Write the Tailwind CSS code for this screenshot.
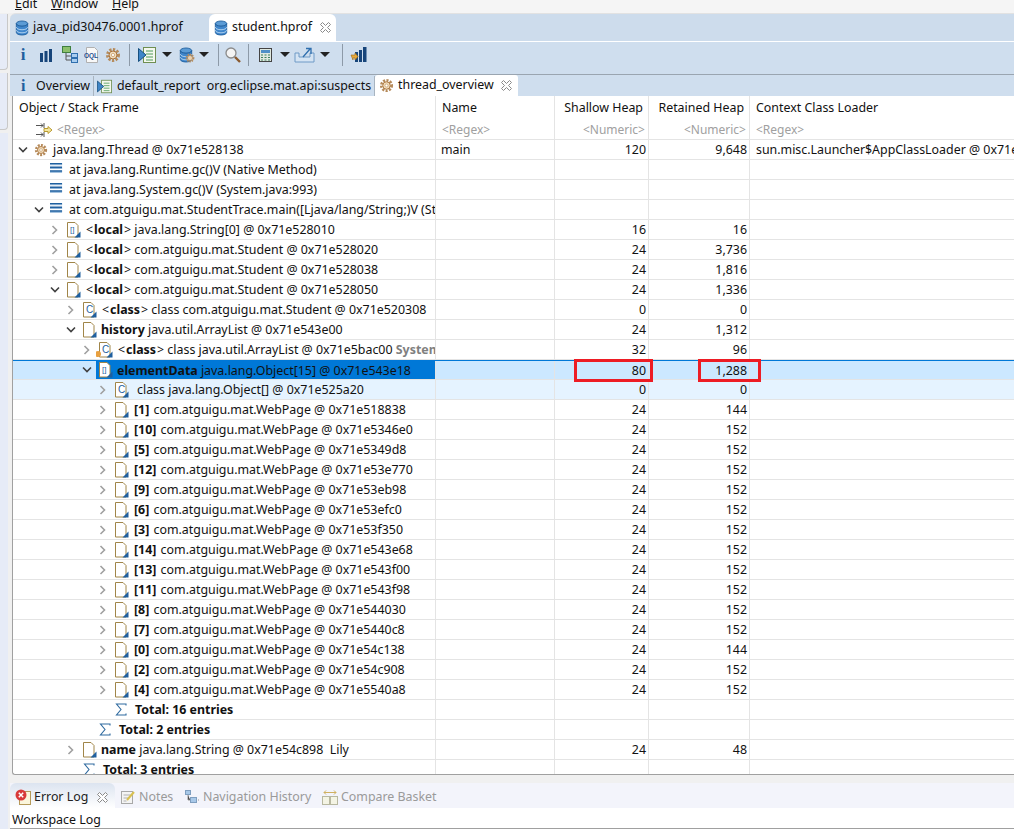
<!DOCTYPE html>
<html lang="en">
<head>
  <meta charset="UTF-8" />
  <title>student.hprof - Memory Analyzer</title>
  <script src="https://cdn.jsdelivr.net/npm/@tailwindcss/browser@4"></script>
</head>
<body class="bg-[#f0f0f0] font-['Noto_Sans',sans-serif] text-[12.4px] text-[#111]">
  <svg class="hidden">
    <symbol id="db" viewBox="0 0 16 18">
      <ellipse cx="8" cy="4" rx="6.500" ry="3" fill="#5b9bd5" stroke="#1f5f9e"/>
      <path d="M1.500 4v10c0 1.700 3 3 6.500 3s6.500-1.300 6.500-3V4c0 1.700-3 3-6.500 3s-6.500-1.300-6.500-3z" fill="#3f86cc" stroke="#1f5f9e"/>
      <path d="M1.500 8c0 1.700 3 3 6.500 3s6.500-1.300 6.500-3M1.500 11.500c0 1.700 3 3 6.500 3s6.500-1.300 6.500-3" fill="none" stroke="#bcd9f2"/>
    </symbol>
    <symbol id="gear" viewBox="0 0 16 16">
      <circle cx="8" cy="8" r="5.500" fill="none" stroke="#b58a5a" stroke-width="3" stroke-dasharray="2.200 1.400"/>
      <circle cx="8" cy="8" r="4" fill="#f1dcbc" stroke="#a9733c"/>
      <circle cx="8" cy="8" r="1.600" fill="#fff" stroke="#c9a06c" stroke-width=".8"/>
    </symbol>
    <symbol id="report" viewBox="0 0 18 18">
      <rect x="5.500" y="1.500" width="12" height="15" fill="#f4f8ee" stroke="#6f8f52"/>
      <path d="M8 5h7M8 8h7M8 11h7M8 14h7" stroke="#4f9a5a"/>
      <path d="M.5 2.500 8 9l-7.500 6.500z" fill="#3f86c8" stroke="#17507f"/>
    </symbol>
    <symbol id="frame" viewBox="0 0 14 12">
      <path d="M0 1.500h13M0 5.500h13M0 9.500h13" stroke="#1f5f9e" stroke-width="2"/>
      <path d="M0 2.500h13M0 6.500h13M0 10.500h13" stroke="#8fb6da" stroke-width="1"/>
    </symbol>
    <symbol id="doc" viewBox="0 0 16 16">
      <path d="M2.500 .5h7.500l3 3v11.500h-10.500z" fill="#fff" stroke="#a08548"/>
      <path d="M15.500 9.500v6H9.500z" fill="#1f5f9e"/>
    </symbol>
    <symbol id="sigma" viewBox="0 0 12 13">
      <path d="M11 2.500V1H1.500l4.500 5.500L1.500 12H11v-1.500" fill="none" stroke="#2f6a9f" stroke-width="1.100"/>
    </symbol>
    <symbol id="open" viewBox="0 0 10 8"><path d="M1 1.500 5 5.500l4-4" fill="none" stroke="#404040" stroke-width="1.600"/></symbol>
    <symbol id="closed" viewBox="0 0 8 10"><path d="M1.500 1 5.500 5l-4 4" fill="none" stroke="#a0a0a0" stroke-width="1.600"/></symbol>
    <symbol id="close" viewBox="0 0 11 11"><path d="M.5 2.500 2.500.5l3 3 3-3 2 2-3 3 3 3-2 2-3-3-3 3-2-2 3-3z" fill="#fff" stroke="#8a8a8a"/></symbol>
  </svg>

  <div class="flex h-[829px] w-[1014px] flex-col overflow-hidden">
    <!-- menu, cut off by the top of the window -->
    <div class="flex h-[13px] shrink-0 overflow-hidden bg-[#f5f5f5] pl-[15px] leading-[13px]">
      <div class="-mt-[3px] flex">
        <span class="w-[36px]"><u>E</u>dit</span>
        <span class="w-[61px]"><u>W</u>indow</span>
        <span><u>H</u>elp</span>
      </div>
    </div>

    <div class="flex min-h-0 flex-1">
      <!-- trim stack on the left -->
      <div class="flex w-[10px] shrink-0 flex-col gap-[3px] bg-[#f0f0f0] pt-px">
        <div class="h-[56px] w-[8px] rounded-br-[4px] border-r border-b border-[#c8c8c8] bg-[#e6ebf7]"></div>
        <div class="h-[57px] w-[8px] rounded-br-[4px] border-r border-b border-[#c8c8c8] bg-[#e6ebf7]"></div>
        <div class="w-[8px] flex-1 bg-[#e6ebf7]"></div>
      </div>

      <div class="flex min-w-0 flex-1 flex-col">
        <!-- editor tabs -->
        <div class="flex h-[28px] shrink-0 items-end rounded-tl-[6px] border-t border-[#e2e2e2] bg-[#cddcec]">
          <div class="flex h-[27px] w-[199px] items-center gap-[4px] pl-[5px]">
            <svg class="h-[18px] w-[14px] shrink-0"><use href="#db"/></svg>
            <span>java_pid30476.0001.hprof</span>
          </div>
          <div class="flex h-[27px] w-[127px] items-center gap-[4px] rounded-t-[6px] bg-white pl-[5px]">
            <svg class="h-[18px] w-[14px] shrink-0"><use href="#db"/></svg>
            <span>student.hprof</span>
            <svg class="ml-[4px] h-[11px] w-[11px] shrink-0"><use href="#close"/></svg>
          </div>
        </div>

        <!-- toolbar -->
        <div class="flex h-[33px] shrink-0 items-center border-t border-white bg-[#cfdeee] pb-[7px] pl-[2px]">
          <span class="flex w-[22px] justify-center font-['Liberation_Serif',serif] text-[17px] font-bold text-[#1f5f9e]">i</span>
          <span class="flex w-[24px] justify-center"><svg class="h-[14px] w-[14px]" viewBox="0 0 14 14"><path d="M1 5h3v9H1zM5.500 3h3v11h-3zM10 1h3v13h-3z" fill="#17457a"/></svg></span>
          <span class="flex w-[23px] justify-center"><svg class="h-[17px] w-[16px]" viewBox="0 0 16 17"><rect x=".5" y=".5" width="8" height="6" fill="#8cc06c" stroke="#3f7f3f"/><path d="M4 7v7h5M4 10h5" fill="none" stroke="#555"/><rect x="9.500" y="7.500" width="6" height="4" fill="#a8cdf0" stroke="#2f6fae"/><rect x="9.500" y="12.500" width="6" height="4" fill="#a8cdf0" stroke="#2f6fae"/></svg></span>
          <span class="flex w-[22px] justify-center"><svg class="h-[16px] w-[16px]" viewBox="0 0 16 16"><path d="M2.500.5h8l3 3v12h-11z" fill="#f8f8f8" stroke="#b0b0b0"/><text x="0" y="11" font-size="6.500" font-weight="700" fill="#1f4f8f" font-family="Liberation Sans">OQL</text></svg></span>
          <span class="flex w-[19px] justify-center"><svg class="h-[16px] w-[16px]"><use href="#gear"/></svg></span>
          <span class="flex w-[14px] justify-center"><span class="h-[22px] w-px bg-[#8d9aa8]"></span></span>
          <span class="flex w-[21px] justify-center"><svg class="h-[18px] w-[18px]"><use href="#report"/></svg></span>
          <span class="flex w-[19px] justify-center"><span class="h-0 w-0 border-x-[5px] border-t-[5px] border-x-transparent border-t-[#222]"></span></span>
          <span class="relative flex w-[20px] justify-center"><svg class="h-[18px] w-[14px]"><use href="#db"/></svg><svg class="absolute top-[7px] left-[9px] h-[10px] w-[10px]"><use href="#gear"/></svg></span>
          <span class="flex w-[15px] justify-center"><span class="h-0 w-0 border-x-[5px] border-t-[5px] border-x-transparent border-t-[#222]"></span></span>
          <span class="flex w-[14px] justify-center"><span class="h-[22px] w-px bg-[#8d9aa8]"></span></span>
          <span class="flex w-[15px] justify-center"><svg class="h-[16px] w-[16px] shrink-0 overflow-visible" viewBox="0 0 16 16"><circle cx="6" cy="6" r="5" fill="#f4f4f4" stroke="#8a8a8a" stroke-width="1.300"/><path d="M10 10l5 5" stroke="#8a5a30" stroke-width="2.400"/></svg></span>
          <span class="flex w-[16px] justify-center"><span class="h-[22px] w-px bg-[#8d9aa8]"></span></span>
          <span class="flex w-[19px] justify-center"><svg class="h-[14px] w-[13px]" viewBox="0 0 13 14"><rect x=".5" y=".5" width="12" height="13" fill="#dfe8e0" stroke="#444"/><rect x="2" y="2" width="9" height="3" fill="#4f8fc8"/><path d="M2 7h2M5.500 7h2M9 7h2M2 9.500h2M5.500 9.500h2M9 9.500h2M2 12h2M5.500 12h2M9 12h2" stroke="#3f7f5f"/></svg></span>
          <span class="flex w-[20px] justify-center"><span class="h-0 w-0 border-x-[5px] border-t-[5px] border-x-transparent border-t-[#222]"></span></span>
          <span class="flex w-[20px] justify-center"><svg class="h-[17px] w-[16px] overflow-visible" viewBox="0 0 16 17"><path d="M-2 7v9h19V7h-4v4H2V7z" fill="#d5e4f3" stroke="#6f9ac6"/><path d="M6 11l7-8M9 2.500h5V8" fill="none" stroke="#2f6fae" stroke-width="1.300"/></svg></span>
          <span class="flex w-[20px] justify-center"><span class="h-0 w-0 border-x-[5px] border-t-[5px] border-x-transparent border-t-[#222]"></span></span>
          <span class="flex w-[14px] justify-center"><span class="h-[22px] w-px bg-[#8d9aa8]"></span></span>
          <span class="flex w-[18px] justify-center"><svg class="h-[17px] w-[17px] shrink-0" viewBox="0 0 17 17"><path d="M5 6h3v10H5zM9 4h3v12H9zM13 1h3.500v15H13z" fill="#17457a"/><path d="M1 9h4V7l3 3.500L5 14v-2H3v2z" fill="#e8a93a" stroke="#9a6a18" stroke-width=".6"/></svg></span>
        </div>

        <!-- result tabs -->
        <div class="flex h-[22px] shrink-0 items-end border-t border-[#9aa5b0] bg-[#cfdeee] pl-[3px]">
          <div class="flex h-[20px] w-[81px] items-center border-r border-[#a8b4c0]">
            <span class="w-[23px] pl-[8px] font-['Liberation_Serif',serif] text-[16px] font-bold text-[#1f5f9e]">i</span>
            <span>Overview</span>
          </div>
          <div class="flex h-[20px] w-[281px] items-center gap-[5px] border-r border-[#a8b4c0] pl-[3px]">
            <svg class="h-[15px] w-[15px] shrink-0"><use href="#report"/></svg>
            <span class="whitespace-pre">default_report  org.eclipse.mat.api:suspects</span>
          </div>
          <div class="flex h-[21px] w-[143px] items-center gap-[4px] rounded-t-[3px] bg-white pl-[4px]">
            <svg class="h-[15px] w-[15px] shrink-0"><use href="#gear"/></svg>
            <span>thread_overview</span>
            <svg class="ml-[3px] h-[11px] w-[11px] shrink-0"><use href="#close"/></svg>
          </div>
        </div>

        <!-- table -->
        <div class="relative ml-[2px] min-h-0 flex-1 overflow-hidden rounded-bl-[3px] border-b border-l border-[#a0a0a0] bg-white">
          <div id="table" class="w-[1100px]"></div>
          <div class="absolute top-[263px] left-[561px] h-[23px] w-[79px] border-[3px] border-[#ed1c24]"></div>
          <div class="absolute top-[263px] left-[685px] h-[23px] w-[63px] border-[3px] border-[#ed1c24]"></div>
        </div>
        <div class="h-[8px] shrink-0"></div>

        <!-- bottom view -->
        <div class="flex h-[25px] shrink-0 items-center whitespace-nowrap bg-[#f3f4fb] pt-[3px] text-[#9a9a9a]">
          <div class="-mt-[3px] flex h-[25px] w-[105px] items-center gap-[3px] rounded-t-[6px] bg-gradient-to-b from-[#dce4f0] to-white pt-[3px] pl-[5px] text-[#222]">
            <svg class="h-[16px] w-[16px] shrink-0" viewBox="0 0 16 16"><rect x="4.500" y="2.500" width="11" height="13" fill="#fbf6dc" stroke="#b59a5a"/><circle cx="6" cy="6" r="5.500" fill="#d83a3a"/><path d="M3.800 3.800l4.400 4.400M8.200 3.800 3.800 8.200" stroke="#fff" stroke-width="1.500"/></svg>
            <span>Error Log</span>
            <svg class="ml-[6px] h-[11px] w-[11px] shrink-0"><use href="#close"/></svg>
          </div>
          <div class="ml-[6px] flex w-[64px] items-center gap-[4px]">
            <svg class="h-[14px] w-[14px] shrink-0" viewBox="0 0 14 14"><rect x=".5" y="1.500" width="11" height="12" fill="#f4f4f4" stroke="#a8a8a8"/><path d="M2.500 5h7M2.500 8h5M2.500 11h3" stroke="#b0b0b0"/><path d="M6 10l7-8" stroke="#d8c050" stroke-width="2"/></svg>
            <span>Notes</span>
          </div>
          <div class="flex w-[137px] items-center gap-[2px]">
            <svg class="h-[14px] w-[16px] shrink-0" viewBox="0 0 16 14"><rect x=".5" y=".5" width="5" height="4" fill="#a8c8e8" stroke="#7f9fc0"/><rect x="5.500" y="7.500" width="6" height="5" fill="#a8c8e8" stroke="#7f9fc0"/><path d="M3 5v5h2M13 10h1" stroke="#999"/></svg>
            <span>Navigation History</span>
          </div>
          <div class="flex items-center gap-[3px]">
            <svg class="h-[16px] w-[16px] shrink-0" viewBox="0 0 16 16"><rect x=".5" y="7.500" width="7" height="8" fill="#f4f4e4" stroke="#b8b8a0"/><rect x="8.500" y="7.500" width="7" height="8" fill="#f4f4e4" stroke="#b8b8a0"/><path d="M2 3.500h12M4 1.500l-2 2 2 2M12 1.500l2 2-2 2" fill="none" stroke="#d0b060"/></svg>
            <span>Compare Basket</span>
          </div>
        </div>
        <div class="h-[21px] shrink-0 border-b border-[#a0a0a0] bg-white pl-[2px] leading-[23px]">Workspace Log</div>
      </div>
    </div>
  </div>

  <script>
    const doc = (mark, size) => `<svg class="h-[16px] w-[16px]"><use href="#doc"/></svg>` + (mark ? `<span class="absolute top-[2px] left-[5px] font-['Liberation_Sans',sans-serif] leading-[11px] text-[#1f5f9e] ${size}">${mark}</span>` : "");
    const icons = {
      gear: `<svg class="ml-px h-[14px] w-[14px]"><use href="#gear"/></svg>`,
      frame: `<svg class="ml-px -mt-[3px] h-[12px] w-[13px]"><use href="#frame"/></svg>`,
      doc: doc(""),
      arr: doc("[]", "text-[8px]"),
      cls: doc("C", "text-[10px]"),
      sys: doc("C", "text-[10px]") + `<span class="absolute top-[9px] -left-[2px] h-[6px] w-[6px] rounded-full bg-[#e8a040]"></span>`,
      sigma: `<svg class="ml-[2px] h-[13px] w-[12px]"><use href="#sigma"/></svg>`
    };

    const W = (n, addr, s, r) => [5, "c", "doc", `<b class="mr-px">[${n}]</b> com.atguigu.mat.WebPage @ ${addr}`, "", s, r, 1];
    const tag = (t) => `&lt;<b class="px-px">${t}</b>&gt;`;
    // depth, arrow, icon, label, name, shallow, retained, extra offset of the label
    const rows = [
      [0, "o", "gear", "java.lang.Thread @ 0x71e528138", "main", "120", "9,648", 0],
      [1, "", "frame", "at java.lang.Runtime.gc()V (Native Method)", "", "", "", 0],
      [1, "", "frame", "at java.lang.System.gc()V (System.java:993)", "", "", "", 0],
      [1, "o", "frame", "at com.atguigu.mat.StudentTrace.main([Ljava/lang/String;)V (Student", "", "", "", 0],
      [2, "c", "arr", `${tag("local")} java.lang.String[0] @ 0x71e528010`, "", "16", "16", 1],
      [2, "c", "doc", `${tag("local")} com.atguigu.mat.Student @ 0x71e528020`, "", "24", "3,736", 1],
      [2, "c", "doc", `${tag("local")} com.atguigu.mat.Student @ 0x71e528038`, "", "24", "1,816", 1],
      [2, "o", "doc", `${tag("local")} com.atguigu.mat.Student @ 0x71e528050`, "", "24", "1,336", 1],
      [3, "c", "cls", `${tag("class")} class com.atguigu.mat.Student @ 0x71e520308`, "", "0", "0", 1],
      [3, "o", "doc", "<b>history</b> java.util.ArrayList @ 0x71e543e00", "", "24", "1,312", 0],
      [4, "c", "sys", `${tag("class")} class java.util.ArrayList @ 0x71e5bac00 <b class="text-[#808080]">System Class</b>`, "", "32", "96", 1],
      [4, "o", "arr", "<b>elementData</b> java.lang.Object[15] @ 0x71e543e18", "", "80", "1,288", 0, "sel"],
      [5, "c", "cls", "class java.lang.Object[] @ 0x71e525a20", "", "0", "0", 4, "hover"],
      W(1, "0x71e518838", "24", "144"), W(10, "0x71e5346e0", "24", "152"), W(5, "0x71e5349d8", "24", "152"),
      W(12, "0x71e53e770", "24", "152"), W(9, "0x71e53eb98", "24", "152"), W(6, "0x71e53efc0", "24", "152"),
      W(3, "0x71e53f350", "24", "152"), W(14, "0x71e543e68", "24", "152"), W(13, "0x71e543f00", "24", "152"),
      W(11, "0x71e543f98", "24", "152"), W(8, "0x71e544030", "24", "152"), W(7, "0x71e5440c8", "24", "152"),
      W(0, "0x71e54c138", "24", "144"), W(2, "0x71e54c908", "24", "152"), W(4, "0x71e5540a8", "24", "152"),
      [5, "", "sigma", "<b>Total: 16 entries</b>", "", "", "", 2],
      [4, "", "sigma", "<b>Total: 2 entries</b>", "", "", "", 2],
      [3, "c", "doc", "<b>name</b> java.lang.String @ 0x71e54c898&nbsp; Lily", "", "24", "48", 0],
      [3, "", "sigma", "<b>Total: 3 entries</b>", "", "", "", 2]
    ];

    const head = `
      <div class="flex h-[23px] items-center">
        <div class="h-full w-[423px] border-r border-[#e4e4e4] pl-[6px] leading-[23px]">Object / Stack Frame</div>
        <div class="h-full w-[119px] border-r border-[#e4e4e4] pl-[6px] leading-[23px]">Name</div>
        <div class="h-full w-[94px] border-r border-[#e4e4e4] pr-[5px] text-right leading-[23px]">Shallow Heap</div>
        <div class="h-full w-[101px] border-r border-[#e4e4e4] pr-[5px] text-right leading-[23px]">Retained Heap</div>
        <div class="h-full pl-[6px] leading-[23px]">Context Class Loader</div>
      </div>
      <div class="flex h-[21px] items-center border-b border-[#e4e4e4] text-[12px] text-[#a0a0a0]">
        <div class="flex h-full w-[423px] items-center gap-[5px] border-r border-[#e4e4e4] pl-[23px] pt-[2px]">
          <svg class="h-[14px] w-[16px]" viewBox="0 0 16 14"><path d="M0 2.500h7M0 11.500h7M5 .5l2 2-2 2M5 9.500l2 2-2 2M8 0v5M8 9v5" fill="none" stroke="#555"/><path d="M8 5.500h4V3.500l4 3.500-4 3.500V8.500H8z" fill="#f4e6a0" stroke="#b89a30"/></svg>
          <span>&lt;Regex&gt;</span>
        </div>
        <div class="h-full w-[119px] border-r border-[#e4e4e4] pl-[6px] leading-[22px]">&lt;Regex&gt;</div>
        <div class="h-full w-[94px] border-r border-[#e4e4e4] pr-[3px] text-right leading-[22px]">&lt;Numeric&gt;</div>
        <div class="h-full w-[101px] border-r border-[#e4e4e4] pr-[3px] text-right leading-[22px]">&lt;Numeric&gt;</div>
        <div class="h-full pl-[6px] leading-[22px]">&lt;Regex&gt;</div>
      </div>`;

    const rowHtml = ([depth, arrow, icon, label, name, shallow, retained, extra, state], i) => {
      const bg = state === "sel" ? "bg-[#cce8ff] border-t border-t-[#0078d7]" : state === "hover" ? "bg-[#e5f3ff]" : "";
      const cell = "h-full border-r border-[#e4e4e4]";
      const chev = arrow === "o" ? `<svg class="h-[8px] w-[10px]"><use href="#open"/></svg>`
        : arrow === "c" ? `<svg class="h-[10px] w-[8px]"><use href="#closed"/></svg>` : "";
      return `<div class="flex h-[20px] items-center border-b border-[#e4e4e4] ${bg}">
        <div class="flex ${cell} w-[423px] items-center overflow-hidden" style="padding-left:${2 + 16 * depth}px">
          <span class="flex w-[16px] shrink-0 justify-center">${chev}</span>
          <div class="ml-px flex h-full min-w-0 flex-1 items-center overflow-hidden ${state === "sel" ? "bg-[#0078d7]" : ""}">
            <span class="relative ml-px flex h-[16px] w-[16px] shrink-0 items-center">${icons[icon]}</span>
            <span class="mt-[2px] whitespace-pre" style="margin-left:${4 + extra}px">${label}</span>
          </div>
        </div>
        <div class="${cell} w-[119px] pl-[5px] leading-[20px]">${name}</div>
        <div class="${cell} w-[94px] pr-[2px] text-right leading-[20px]">${shallow}</div>
        <div class="${cell} w-[101px] pr-[2px] text-right leading-[20px]">${retained}</div>
        <div class="h-full whitespace-nowrap pl-[6px] leading-[20px]">${i === 0 ? "sun.misc.Launcher$AppClassLoader @ 0x71e528138" : ""}</div>
      </div>`;
    };

    document.getElementById("table").innerHTML = head + rows.map(rowHtml).join("");
  </script>
</body>
</html>
